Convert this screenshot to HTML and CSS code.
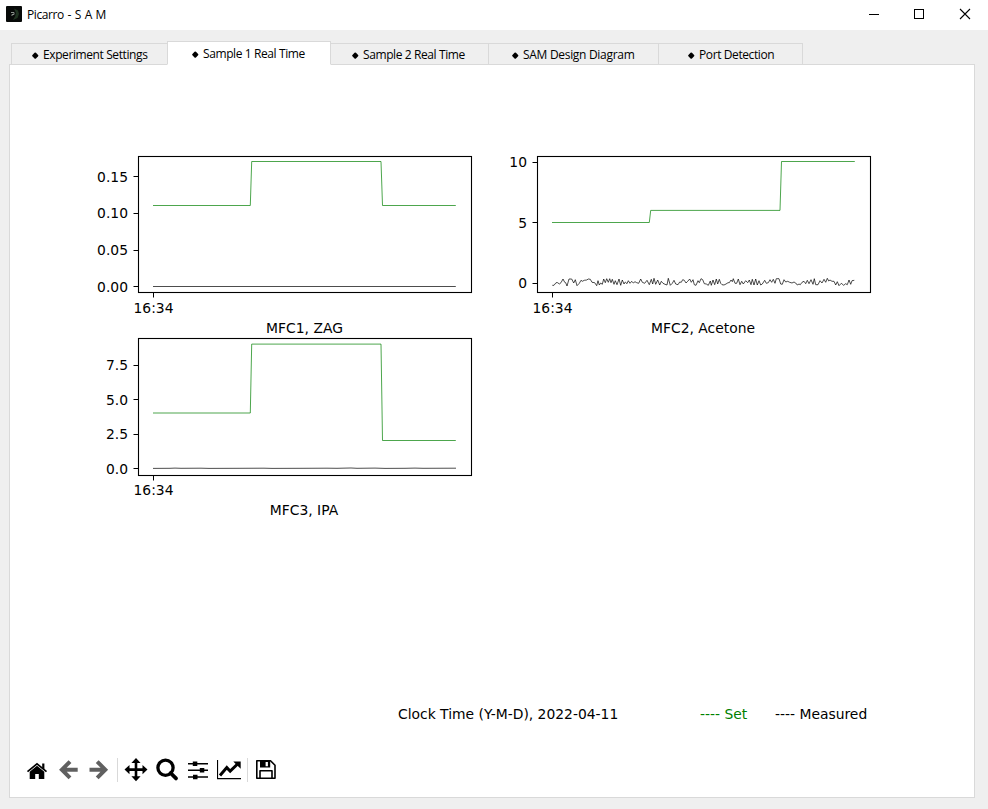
FILE: index.html
```html
<!DOCTYPE html>
<html lang="en">
<head>
<meta charset="utf-8">
<title>Picarro - S A M</title>
<link rel="stylesheet" href="styles.css">
</head>
<body>
<header class="titlebar">
  <svg class="app-icon" width="16" height="16" viewBox="0 0 16 16"><rect width="16" height="16" rx="1" fill="#080a09"/><path d="M8 2.5 12 4.5 13 8 11.5 12 7 14 9 10.5 10 7Z" fill="#203321"/><path d="M5 6.5h3v2H6v1.5" fill="none" stroke="#8a918c"/></svg>
  <span class="label title">Picarro - S A M</span>
  <div class="controls">
    <svg width="46" height="30" viewBox="0 0 46 30"><path d="M19 14.5h10" stroke="#000"/></svg>
    <svg width="46" height="30" viewBox="0 0 46 30"><rect x="18.5" y="9.500" width="9" height="9" fill="none" stroke="#000"/></svg>
    <svg width="46" height="30" viewBox="0 0 46 30"><path d="M18 9l10 10M28 9l-10 10" stroke="#000" stroke-width="1.1"/></svg>
  </div>
</header>
<nav class="tabs">
  <div class="tab t1"><i class="dot"></i><span class="label">Experiment Settings</span></div>
  <div class="tab t2 active"><i class="dot"></i><span class="label">Sample 1 Real Time</span></div>
  <div class="tab t3"><i class="dot"></i><span class="label">Sample 2 Real Time</span></div>
  <div class="tab t4"><i class="dot"></i><span class="label">SAM Design Diagram</span></div>
  <div class="tab t5"><i class="dot"></i><span class="label">Port Detection</span></div>
</nav>
<main class="panel">
  <section class="charts">
    <svg class="chart" width="399" height="182" viewBox="0 0 399 182">
      <path class="set" d="M61 51.500H158.300L159.700 7.500H289L290.500 51.500H363.800"/>
      <path class="measured" d="M61 132.500H363.800"/>
      <rect class="frame" x="46.500" y="2.500" width="333" height="136"/>
      <path class="tick" d="M41.500 22.500h4.500M41.500 59.500h4.500M41.500 96.500h4.500M41.500 132.500h4.500M61.500 139v4.500"/>
      <g class="ylab"><text x="36" y="28">0.15</text><text x="36" y="64">0.10</text><text x="36" y="101">0.05</text><text x="36" y="138">0.00</text></g>
      <g class="xlab"><text x="61.500" y="159">16:34</text><text x="212.500" y="179">MFC1, ZAG</text></g>
    </svg>
    <svg class="chart" width="399" height="182" viewBox="0 0 399 182">
      <path class="set" d="M61 68.500H158.300L159.700 56.400H289L290.500 7.500H363.800"/>
      <path class="measured" id="noise"/>
      <rect class="frame" x="46.500" y="2.500" width="333" height="136"/>
      <path class="tick" d="M41.500 8.500h4.500M41.500 68.500h4.500M41.500 129.500h4.500M61.500 139v4.500"/>
      <g class="ylab"><text x="36" y="13">10</text><text x="36" y="74">5</text><text x="36" y="134">0</text></g>
      <g class="xlab"><text x="61.500" y="159">16:34</text><text x="212" y="179">MFC2, Acetone</text></g>
    </svg>
    <svg class="chart" width="399" height="182" viewBox="0 0 399 182">
      <path class="set" d="M61 77H158.300L159.700 8.100H289L290.500 104.500H363.800"/>
      <path class="measured" d="M61 132.400l17-.1 5-.2 6 .2 20-.1 8 .2 30-.1 25-.1 8 .2 30-.1 25-.1 10 .1 14-.3 6 .3 18-.2 10 .3 20-.1 10-.2 8 .2 33-.1"/>
      <rect class="frame" x="46.500" y="2.500" width="333" height="137"/>
      <path class="tick" d="M41.500 29.500h4.500M41.500 63.500h4.500M41.500 98.500h4.500M41.500 132.500h4.500M61.500 140v4.500"/>
      <g class="ylab"><text x="36" y="34">7.5</text><text x="36" y="69">5.0</text><text x="36" y="103">2.5</text><text x="36" y="138">0.0</text></g>
      <g class="xlab"><text x="61.500" y="159">16:34</text><text x="212" y="179">MFC3, IPA</text></g>
    </svg>
  </section>
  <div class="legend"><span class="clock">Clock Time (Y-M-D), 2022-04-11</span><span class="key-set">---- Set</span><span>---- Measured</span></div>
  <div class="toolbar">
    <svg class="ico home" viewBox="0 0 24 24"><path d="M12 7.700 19.300 13.800V21H13.800V16H10.200V21H4.700V13.800Z"/><path d="M2.500 13.700 12 5.900 21.500 13.700" fill="none" stroke="#000" stroke-width="1.700"/><path d="M17.200 5.600h2.200v6l-2.200-1.800z"/></svg>
    <svg class="ico back" viewBox="0 0 24 24"><path class="arrow" d="M7 11.700H21.700M14 3.600 5.900 11.700l8.100 8.100"/></svg>
    <svg class="ico fwd" viewBox="0 0 24 24"><path class="arrow" d="M3.500 11.700H18.200M11.200 3.600l8.100 8.100-8.100 8.100"/></svg>
    <i class="sep"></i>
    <svg class="ico move" viewBox="0 0 24 24"><path d="M12 2V21M2.500 11.600H21.500" fill="none" stroke="#000" stroke-width="2.600"/><path d="M12 0l4.600 5H7.400zM12 23.200l4.600-5H7.400zM.5 11.600l5-4.600v9.200zM23.500 11.600l-5-4.600v9.200z"/></svg>
    <svg class="ico" viewBox="0 0 24 24"><g fill="none" stroke="#000" stroke-width="3.300"><circle cx="10.500" cy="9.800" r="7.600"/><path d="M15.600 15l5.400 5.400" stroke-width="3.800" stroke-linecap="round"/></g></svg>
    <svg class="ico" viewBox="0 0 24 24"><path d="M2 5.700H22M2 12.300H22M2 19H22" stroke="#000" stroke-width="1.600"/><path d="M6.800 3.400h4.500V8H6.800zM13.800 10h4.500v4.600h-4.500zM7 16.700h4.500v4.600H7z"/></svg>
    <svg class="ico" viewBox="0 0 24 24"><path d="M.5 2V20.600H24" fill="none" stroke="#000" stroke-width="1.200"/><path d="M3 17.400 9.800 9.600 13.200 13.200 20.600 6" fill="none" stroke="#000" stroke-width="3"/><path d="M16.300 3.600h7.400v7.200z"/></svg>
    <i class="sep save-sep"></i>
    <svg class="ico" viewBox="0 0 24 24"><path d="M2.800 2.700H16.500L21 7.200V20.300H2.800ZM6 20V12.800H18V20" fill="none" stroke="#000" stroke-width="1.600" stroke-linejoin="round"/><path d="M6 2.700h10.200V9.600H6zM11.600 4.100v4.100h2.300V4.100z" fill-rule="evenodd"/></svg>
  </div>
</main>
<script src="script.js"></script>
</body>
</html>
```
FILE: styles.css
```css
* { box-sizing: border-box; }
body { margin: 0; width: 988px; height: 809px; overflow: hidden; background: #efefef; color: #000; font: 12px/16px "Open Sans", "Noto Sans", sans-serif; }
svg { display: block; flex: none; }
.titlebar { height: 30px; background: #fff; display: flex; padding-left: 6px; }
.app-icon { margin: 6px 5px 0 0; }
.label { white-space: nowrap; letter-spacing: -0.4px; }
.title { margin-top: 7px; word-spacing: 1px; }
.t4 .label { letter-spacing: -0.3px; }
.controls { display: flex; margin-left: auto; }
.tabs { display: flex; align-items: flex-end; height: 35px; padding-left: 11px; position: relative; z-index: 1; }
.tab { display: flex; height: 22px; padding: 3px 0 0 21px; border: 1px solid #d9d9d9; border-left: 0; background: #efefef; }
.t1 { width: 156px; border-left: 1px solid #d9d9d9; border-right: 0; padding-left: 20px; }
.t2 { width: 164px; }
.t3 { width: 158px; }
.t4 { width: 170px; padding-left: 23px; }
.t5 { width: 144px; padding-left: 29px; }
.tab.active { height: 24px; background: #fff; border-left: 1px solid #d9d9d9; border-bottom-color: #fff; padding-left: 24px; padding-top: 4px; }
.dot { flex: none; width: 4.500px; height: 4.500px; margin: 6px 5.500px 0 1px; background: #000; border-radius: 1px; transform: rotate(45deg); }
.panel { width: 966px; height: 734px; margin: -1px 0 0 9px; border: 1px solid #d9d9d9; background: #fff; padding: 89px 0 0 15px; }
.charts { display: grid; grid-template-columns: 399px 399px; grid-auto-rows: 182px; margin-left: 67px; font: 13.890px "DejaVu Sans", sans-serif; }
.chart { overflow: visible; }
.set, .measured { fill: none; stroke: #008000; stroke-width: .7; }
.measured { stroke: #000; }
.frame { fill: none; stroke: #000; stroke-width: 1.100; }
.tick { stroke: #000; }
.ylab { text-anchor: end; }
.xlab { text-anchor: middle; }
.legend { display: flex; margin: 188px 0 0 373px; font: 13.890px/16px "DejaVu Sans", sans-serif; white-space: pre; }
.clock { width: 302px; }
.key-set { width: 75px; color: #008000; }
.toolbar { display: flex; align-items: center; gap: 7px; height: 24px; margin-top: 36px; }
.ico { width: 24px; height: 24px; }
.back { margin-right: -1px; }
.arrow { fill: none; stroke: #606060; stroke-width: 4; }
.sep { width: 1px; height: 24px; background: #d9d9d9; }
.move { margin-left: -1px; }
.save-sep { margin: 0 -1px; }
```
FILE: script.js
```js
// Measured flow samples, as x,y pairs in thirds of a pixel.
const samples = [
  22,46, 27,46, 33,38, 38,38, 43,42, 48,38, 54,27, 59,37, 62,38, 66,48, 72,27, 80,27, 86,39, 91,29, 96,47, 103,40, 108,31,
  112,34, 118,31, 125,30, 130,27, 136,28, 141,37, 149,38, 155,47, 159,32, 163,45, 167,39, 172,43, 176,27, 181,38, 185,26,
  190,37, 194,26, 198,38, 202,28, 207,43, 211,32, 216,44, 222,27, 227,46, 232,30, 237,42, 241,36, 246,41, 250,32, 255,40,
  260,34, 265,39, 270,35, 275,38, 281,40, 287,27, 292,37, 299,40, 306,31, 313,44, 319,28, 323,42, 327,25, 332,43, 338,30,
  344,45, 349,34, 354,40, 360,43, 366,45, 370,25, 376,46, 382,40, 387,31, 392,42, 399,44, 404,36, 409,37, 413,29, 418,31,
  423,39, 428,34, 434,27, 439,37, 444,29, 448,44, 453,46, 459,32, 463,38, 468,26, 473,29, 478,41, 484,42,
  490,46, 496,33, 499,46, 504,30, 509,44, 514,27, 518,42, 523,28, 527,40, 531,44, 537,45, 543,42, 549,38, 553,38,
  558,30, 562,35, 565,26, 570,40, 575,40, 580,27, 585,44, 590,34, 595,42, 602,32, 608,38, 613,30, 618,44, 622,28,
  627,45, 632,27, 637,45, 642,32, 647,45, 652,42, 659,31, 664,40, 670,38, 675,29, 680,37, 685,28, 690,40, 694,26,
  702,26, 707,42, 712,43, 717,29, 722,36, 728,34, 734,37, 741,39, 747,36, 752,39, 757,45, 762,42, 766,44, 771,37,
  777,34, 782,41, 787,31, 792,41, 798,29, 804,43, 808,26, 812,44, 819,44, 825,32, 831,39, 837,28, 842,37, 847,25,
  851,33, 855,30, 861,34, 867,34, 872,45, 877,35, 882,47, 889,40, 896,46, 902,41, 907,44, 912,30, 917,43, 921,32, 928,31
];
let d = "";
for (let i = 0; i < samples.length; i += 2) {
  d += (i ? "L" : "M") + (54 + samples[i] / 3).toFixed(1) + " " + (116 + samples[i + 1] / 3).toFixed(1);
}
document.getElementById("noise").setAttribute("d", d);
```
